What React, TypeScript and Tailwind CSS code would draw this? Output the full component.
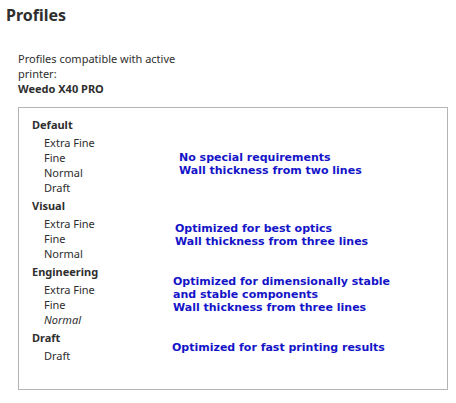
const GROUPS = [
  {
    name: "Default",
    items: [{ label: "Extra Fine" }, { label: "Fine" }, { label: "Normal" }, { label: "Draft" }],
    info: ["No special requirements", "Wall thickness from two lines"],
    infoClass: "pl-[147px] pt-[37px]",
  },
  {
    name: "Visual",
    items: [{ label: "Extra Fine" }, { label: "Fine" }, { label: "Normal" }],
    info: ["Optimized for best optics", "Wall thickness from three lines"],
    infoClass: "pl-[143px] pt-[27px]",
  },
  {
    name: "Engineering",
    items: [{ label: "Extra Fine" }, { label: "Fine" }, { label: "Normal", italic: true }],
    info: ["Optimized for dimensionally stable", "and stable components", "Wall thickness from three lines"],
    infoClass: "pl-[141px] pt-[14px]",
  },
  {
    name: "Draft",
    items: [{ label: "Draft" }],
    info: ["Optimized for fast printing results"],
    infoClass: "pl-[140px] pt-[14px]",
  },
];

export default function App() {
  return (
    <div className="w-[456px] h-[403px] bg-white text-[#2e2e2e] font-['Noto_Sans',sans-serif] overflow-hidden">
      <h1 className="px-[6px] pt-[3px] text-[16px] font-bold leading-[24px]">Profiles</h1>

      <div className="pl-[18px] pt-[24px] text-[11px] leading-[15px]">
        <p className="w-[170px]">Profiles compatible with active printer:</p>
        <p className="font-bold">Weedo X40 PRO</p>
      </div>

      <div className="ml-[18px] mt-[11px] w-[430px] h-[283px] border border-[#b4b4b4] pl-[13px] pt-[6px]">
        {GROUPS.map((g) => (
          <div key={g.name} className="flex">
            <div className="w-0 shrink-0">
              <div className="font-bold text-[11px] leading-[21px] whitespace-nowrap">{g.name}</div>
              {g.items.map((it, i) => (
                <div
                  key={i}
                  className={`pl-[12px] text-[11px] leading-[15px] whitespace-nowrap ${it.italic ? "italic" : ""}`}
                >
                  {it.label}
                </div>
              ))}
            </div>
            <div
              className={`${g.infoClass} font-['DejaVu_Sans',sans-serif] font-bold text-[11px] leading-[13px] text-[#1414c8] whitespace-nowrap`}
            >
              {g.info.map((l) => (
                <div key={l}>{l}</div>
              ))}
            </div>
          </div>
        ))}
      </div>
    </div>
  );
}
